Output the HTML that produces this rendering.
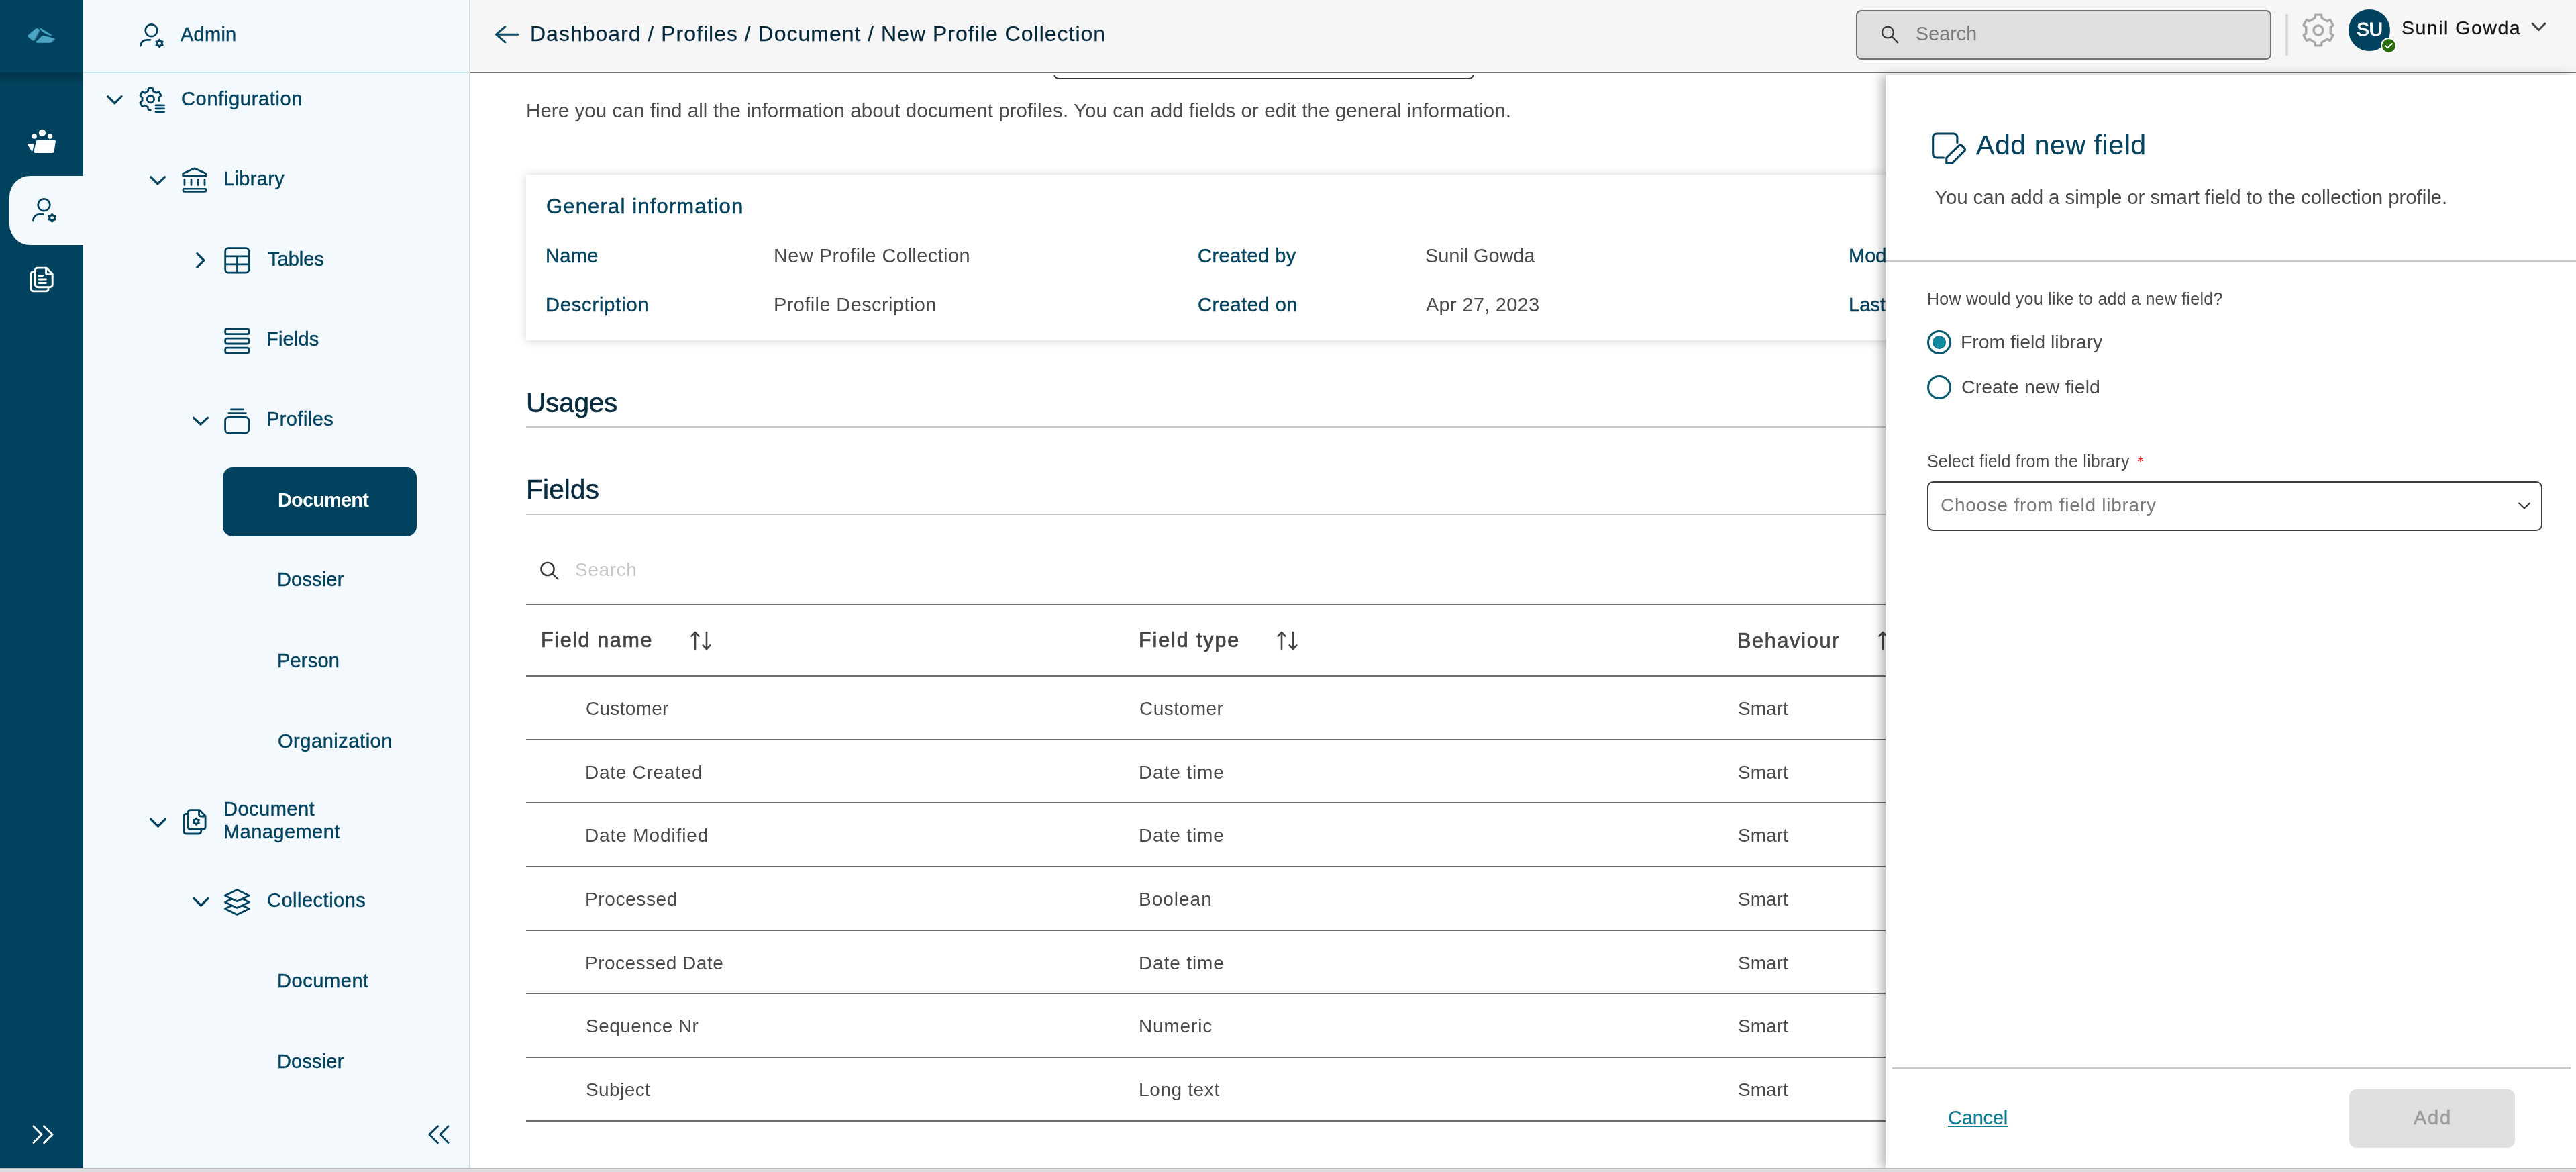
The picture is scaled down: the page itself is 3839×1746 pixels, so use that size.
<!DOCTYPE html>
<html><head><meta charset="utf-8"><style>
html,body{margin:0;padding:0;width:3839px;height:1746px;overflow:hidden;background:#fff}
body{position:relative;font-family:"Liberation Sans",sans-serif}
.t{position:absolute;white-space:nowrap;line-height:1;font-family:"Liberation Sans",sans-serif;will-change:transform}
</style></head><body>
<div style="position:absolute;left:0;top:0;width:124px;height:1740px;background:#01435f"></div>
<div style="position:absolute;left:0;top:108px;width:124px;height:18px;background:linear-gradient(rgba(0,0,0,0.22),rgba(0,0,0,0))"></div>
<svg style="position:absolute;left:36px;top:34px;" width="54" height="36" viewBox="0 0 54 36"><g fill="#2f6e86" transform="translate(1.7 0.6)"><path d="M5.5 18.6 L17 8.7 Q18.5 7.7 20.3 8.4 L21.6 9.3 Q22.6 10.4 21.8 12.2 L14.8 25.6 Q13.8 27 12.3 26.2 L5.8 20.7 Q4.4 19.7 5.5 18.6 Z"/><path d="M23 7 L41.2 18.2 L38.5 18.7 Q30.5 15.6 26.8 13 Q24 10.2 23 7 Z"/><path d="M17.3 28.3 L26.5 19.6 Q27.5 18.9 29 19.1 L43.8 22.6 Q45.3 23.1 44.4 24.4 L40.2 28.7 Q39.1 29.5 36.8 29.5 L18.4 29.6 Q16.6 29.3 17.3 28.3 Z"/></g><g fill="#4ba6c6"><path d="M5.5 18.6 L17 8.7 Q18.5 7.7 20.3 8.4 L21.6 9.3 Q22.6 10.4 21.8 12.2 L14.8 25.6 Q13.8 27 12.3 26.2 L5.8 20.7 Q4.4 19.7 5.5 18.6 Z"/><path d="M23 7 L41.2 18.2 L38.5 18.7 Q30.5 15.6 26.8 13 Q24 10.2 23 7 Z"/><path d="M17.3 28.3 L26.5 19.6 Q27.5 18.9 29 19.1 L43.8 22.6 Q45.3 23.1 44.4 24.4 L40.2 28.7 Q39.1 29.5 36.8 29.5 L18.4 29.6 Q16.6 29.3 17.3 28.3 Z"/></g></svg>
<svg style="position:absolute;left:36px;top:186px;" width="54" height="48" viewBox="0 0 54 48"><g fill="#fff"><circle cx="26.9" cy="11.9" r="5.1"/><circle cx="15.2" cy="17" r="3.7"/><circle cx="38.6" cy="17" r="3.7"/><path d="M20.8 22.3 L44.2 22.3 Q47.2 22.3 46.8 25.2 L44.6 39.4 Q44.1 42 41.3 42 L17 42 Q14 42 14.6 39.2 L17.7 25 Q18.3 22.3 20.8 22.3 Z"/><path d="M6.2 28.3 L13.5 28.3 Q14.8 28.3 14.6 29.6 L12.6 38.6 Q12 40.6 10.9 38.9 L5.3 29.8 Q4.6 28.3 6.2 28.3 Z"/></g></svg>
<div style="position:absolute;left:14px;top:262px;width:110px;height:103px;background:#f3f9fd;border-radius:31px 0 0 31px"></div>
<svg style="position:absolute;left:40px;top:286px;" width="52" height="52" viewBox="0 0 52 52"><g fill="none" stroke="#01435f" stroke-width="2.7" stroke-linecap="round"><circle cx="25.5" cy="19.3" r="8.9"/><path d="M9.4 42.2 Q10.5 33.3 19 33.3 L24 33.3"/></g><path d="M37.60 32.10 L39.80 34.69 L43.14 35.30 L42.00 38.50 L43.14 41.70 L39.80 42.31 L37.60 44.90 L35.40 42.31 L32.06 41.70 L33.20 38.50 L32.06 35.30 L35.40 34.69 Z" fill="#01435f" stroke="#01435f" stroke-width="1.3" stroke-linejoin="round"/><circle cx="37.60" cy="38.50" r="2.30" fill="#f3f9fd"/></svg>
<svg style="position:absolute;left:38px;top:390px;" width="50" height="52" viewBox="0 0 50 52"><g fill="none" stroke="#fff" stroke-width="2.9" stroke-linecap="round" stroke-linejoin="round"><path d="M14.4 14.6 L12 14.6 Q8.2 14.6 8.2 18.5 L8.2 40 Q8.2 43.9 12 43.9 L30.3 43.9 Q34.2 43.9 34.2 40"/><path d="M18.3 9.1 L31.2 9.1 L40.2 18.2 L40.2 33.8 Q40.2 37.7 36.3 37.7 L18.3 37.7 Q14.4 37.7 14.4 33.8 L14.4 13 Q14.4 9.1 18.3 9.1 Z"/><path d="M30.6 9.5 L30.6 16.5 Q30.6 18.6 32.7 18.6 L39.8 18.6"/><path d="M19.6 20.5 L25.6 20.5 M19.6 26 L30.4 26 M19.6 31.5 L30.4 31.5"/></g></svg>
<svg style="position:absolute;left:40px;top:1668px;" width="50" height="44" viewBox="0 0 50 44"><g fill="none" stroke="#fff" stroke-width="2.9" stroke-linecap="round" stroke-linejoin="round"><path d="M10 9.9 L22 22.2 L10 34.5 M25.3 9.7 L38.1 22.2 L25.6 34.8"/></g></svg>
<div style="position:absolute;left:124px;top:0;width:575px;height:1740px;background:#f3f9fd"></div>
<div style="position:absolute;left:699px;top:0;width:2px;height:1740px;background:#d4d9dc"></div>
<div style="position:absolute;left:124px;top:107px;width:575px;height:2px;background:#c4e6ef"></div>
<svg style="position:absolute;left:200px;top:26px;" width="52" height="52" viewBox="0 0 52 52"><g fill="none" stroke="#01435f" stroke-width="2.7" stroke-linecap="round"><circle cx="25.5" cy="19.3" r="8.9"/><path d="M9.4 42.2 Q10.5 33.3 19 33.3 L24 33.3"/></g><path d="M37.60 32.10 L39.80 34.69 L43.14 35.30 L42.00 38.50 L43.14 41.70 L39.80 42.31 L37.60 44.90 L35.40 42.31 L32.06 41.70 L33.20 38.50 L32.06 35.30 L35.40 34.69 Z" fill="#01435f" stroke="#01435f" stroke-width="1.3" stroke-linejoin="round"/><circle cx="37.60" cy="38.50" r="2.30" fill="#f3f9fd"/></svg>
<div id="sb_admin" class="t" style="left:269.00px;top:37.45px;font-size:29.00px;font-weight:400;color:#01435f;letter-spacing:0.250px;-webkit-text-stroke:0.45px #01435f;">Admin</div>
<svg style="position:absolute;left:150px;top:124px;" width="100" height="50" viewBox="0 0 100 50"><g fill="none" stroke="#01435f" stroke-width="3.2" stroke-linecap="round" stroke-linejoin="round"><path d="M10.7 19.6 L20.9 29.9 L31.1 19.6"/></g><g fill="none" stroke="#01435f" stroke-width="2.8" stroke-linecap="round" stroke-linejoin="round"><path d="M74.40 40.10 L74.26 40.10 L74.11 40.10 L73.97 40.09 L73.83 40.09 L73.68 40.08 L73.54 40.08 L73.40 40.07 L73.26 40.06 L73.11 40.05 L72.97 40.04 L72.83 40.02 L72.69 40.01 L72.54 39.99 L72.40 39.98 L72.26 39.96 L72.12 39.94 L71.98 39.92 L71.83 39.90 L71.69 39.88 L71.55 39.85 L71.41 39.83 L71.29 39.70 L71.20 39.43 L71.11 39.15 L71.03 38.88 L70.96 38.61 L70.89 38.33 L70.82 38.06 L70.76 37.79 L70.70 37.51 L70.65 37.24 L70.60 36.97 L70.55 36.69 L70.51 36.42 L70.48 36.15 L70.44 35.87 L70.42 35.60 L70.36 35.42 L70.26 35.39 L70.16 35.35 L70.06 35.31 L69.96 35.28 L69.86 35.24 L69.75 35.20 L69.65 35.16 L69.55 35.11 L69.46 35.07 L69.36 35.03 L69.26 34.98 L69.16 34.94 L69.06 34.89 L68.96 34.85 L68.87 34.80 L68.77 34.75 L68.67 34.70 L68.58 34.65 L68.48 34.60 L68.39 34.55 L68.29 34.49 L68.20 34.44 L68.11 34.38 L68.01 34.33 L67.92 34.27 L67.83 34.22 L67.74 34.16 L67.65 34.10 L67.56 34.04 L67.47 33.98 L67.38 33.92 L67.29 33.86 L67.20 33.80 L67.11 33.73 L67.02 33.67 L66.94 33.60 L66.85 33.54 L66.77 33.47 L66.68 33.40 L66.60 33.34 L66.51 33.27 L66.43 33.20 L66.35 33.13 L66.26 33.06 L66.08 33.10 L65.84 33.21 L65.58 33.32 L65.33 33.43 L65.07 33.53 L64.81 33.63 L64.55 33.72 L64.29 33.81 L64.02 33.90 L63.75 33.98 L63.48 34.06 L63.21 34.13 L62.94 34.21 L62.66 34.27 L62.38 34.34 L62.10 34.39 L61.93 34.35 L61.84 34.24 L61.75 34.13 L61.65 34.02 L61.57 33.91 L61.48 33.80 L61.39 33.68 L61.30 33.57 L61.22 33.46 L61.13 33.34 L61.05 33.22 L60.97 33.11 L60.88 32.99 L60.80 32.87 L60.72 32.75 L60.65 32.63 L60.57 32.51 L60.49 32.39 L60.42 32.27 L60.34 32.15 L60.27 32.02 L60.20 31.90 L60.13 31.78 L60.06 31.65 L59.99 31.53 L59.92 31.40 L59.85 31.27 L59.79 31.15 L59.72 31.02 L59.66 30.89 L59.60 30.76 L59.54 30.63 L59.48 30.50 L59.42 30.37 L59.36 30.24 L59.30 30.11 L59.25 29.98 L59.19 29.84 L59.14 29.71 L59.09 29.58 L59.04 29.44 L58.99 29.31 L58.94 29.17 L58.99 29.01 L59.18 28.79 L59.37 28.58 L59.57 28.38 L59.77 28.17 L59.97 27.97 L60.17 27.78 L60.38 27.59 L60.59 27.40 L60.80 27.22 L61.01 27.04 L61.22 26.86 L61.44 26.69 L61.66 26.52 L61.88 26.36 L62.10 26.20 L62.23 26.07 L62.21 25.96 L62.19 25.85 L62.17 25.75 L62.15 25.64 L62.14 25.53 L62.12 25.43 L62.11 25.32 L62.09 25.21 L62.08 25.10 L62.07 25.00 L62.06 24.89 L62.05 24.78 L62.04 24.67 L62.03 24.56 L62.02 24.46 L62.02 24.35 L62.01 24.24 L62.01 24.13 L62.00 24.02 L62.00 23.92 L62.00 23.81 L62.00 23.70 L62.00 23.59 L62.00 23.48 L62.00 23.38 L62.01 23.27 L62.01 23.16 L62.02 23.05 L62.02 22.94 L62.03 22.84 L62.04 22.73 L62.05 22.62 L62.06 22.51 L62.07 22.40 L62.08 22.30 L62.09 22.19 L62.11 22.08 L62.12 21.97 L62.14 21.87 L62.15 21.76 L62.17 21.65 L62.19 21.55 L62.21 21.44 L62.23 21.33 L62.10 21.20 L61.88 21.04 L61.66 20.88 L61.44 20.71 L61.22 20.54 L61.01 20.36 L60.80 20.18 L60.59 20.00 L60.38 19.81 L60.17 19.62 L59.97 19.43 L59.77 19.23 L59.57 19.02 L59.37 18.82 L59.18 18.61 L58.99 18.39 L58.94 18.23 L58.99 18.09 L59.04 17.96 L59.09 17.82 L59.14 17.69 L59.19 17.56 L59.25 17.42 L59.30 17.29 L59.36 17.16 L59.42 17.03 L59.48 16.90 L59.54 16.77 L59.60 16.64 L59.66 16.51 L59.72 16.38 L59.79 16.25 L59.85 16.13 L59.92 16.00 L59.99 15.87 L60.06 15.75 L60.13 15.62 L60.20 15.50 L60.27 15.38 L60.34 15.25 L60.42 15.13 L60.49 15.01 L60.57 14.89 L60.65 14.77 L60.72 14.65 L60.80 14.53 L60.88 14.41 L60.97 14.29 L61.05 14.18 L61.13 14.06 L61.22 13.94 L61.30 13.83 L61.39 13.72 L61.48 13.60 L61.57 13.49 L61.65 13.38 L61.75 13.27 L61.84 13.16 L61.93 13.05 L62.10 13.01 L62.38 13.06 L62.66 13.13 L62.94 13.19 L63.21 13.27 L63.48 13.34 L63.75 13.42 L64.02 13.50 L64.29 13.59 L64.55 13.68 L64.81 13.77 L65.07 13.87 L65.33 13.97 L65.58 14.08 L65.84 14.19 L66.08 14.30 L66.26 14.34 L66.35 14.27 L66.43 14.20 L66.51 14.13 L66.60 14.06 L66.68 14.00 L66.77 13.93 L66.85 13.86 L66.94 13.80 L67.02 13.73 L67.11 13.67 L67.20 13.60 L67.29 13.54 L67.38 13.48 L67.47 13.42 L67.56 13.36 L67.65 13.30 L67.74 13.24 L67.83 13.18 L67.92 13.13 L68.01 13.07 L68.11 13.02 L68.20 12.96 L68.29 12.91 L68.39 12.85 L68.48 12.80 L68.58 12.75 L68.67 12.70 L68.77 12.65 L68.87 12.60 L68.96 12.55 L69.06 12.51 L69.16 12.46 L69.26 12.42 L69.36 12.37 L69.46 12.33 L69.55 12.29 L69.65 12.24 L69.75 12.20 L69.86 12.16 L69.96 12.12 L70.06 12.09 L70.16 12.05 L70.26 12.01 L70.36 11.98 L70.42 11.80 L70.44 11.53 L70.48 11.25 L70.51 10.98 L70.55 10.71 L70.60 10.43 L70.65 10.16 L70.70 9.89 L70.76 9.61 L70.82 9.34 L70.89 9.07 L70.96 8.79 L71.03 8.52 L71.11 8.25 L71.20 7.97 L71.29 7.70 L71.41 7.57 L71.55 7.55 L71.69 7.52 L71.83 7.50 L71.98 7.48 L72.12 7.46 L72.26 7.44 L72.40 7.42 L72.54 7.41 L72.69 7.39 L72.83 7.38 L72.97 7.36 L73.11 7.35 L73.26 7.34 L73.40 7.33 L73.54 7.32 L73.68 7.32 L73.83 7.31 L73.97 7.31 L74.11 7.30 L74.26 7.30 L74.40 7.30 L74.54 7.30 L74.69 7.30 L74.83 7.31 L74.97 7.31 L75.12 7.32 L75.26 7.32 L75.40 7.33 L75.54 7.34 L75.69 7.35 L75.83 7.36 L75.97 7.38 L76.11 7.39 L76.26 7.41 L76.40 7.42 L76.54 7.44 L76.68 7.46 L76.82 7.48 L76.97 7.50 L77.11 7.52 L77.25 7.55 L77.39 7.57 L77.51 7.70 L77.60 7.97 L77.69 8.25 L77.77 8.52 L77.84 8.79 L77.91 9.07 L77.98 9.34 L78.04 9.61 L78.10 9.89 L78.15 10.16 L78.20 10.43 L78.25 10.71 L78.29 10.98 L78.32 11.25 L78.36 11.53 L78.38 11.80 L78.44 11.98 L78.54 12.01 L78.64 12.05 L78.74 12.09 L78.84 12.12 L78.94 12.16 L79.05 12.20 L79.15 12.24 L79.25 12.29 L79.34 12.33 L79.44 12.37 L79.54 12.42 L79.64 12.46 L79.74 12.51 L79.84 12.55 L79.93 12.60 L80.03 12.65 L80.13 12.70 L80.22 12.75 L80.32 12.80 L80.41 12.85 L80.51 12.91 L80.60 12.96 L80.69 13.02 L80.79 13.07 L80.88 13.13 L80.97 13.18 L81.06 13.24 L81.15 13.30 L81.24 13.36 L81.33 13.42 L81.42 13.48 L81.51 13.54 L81.60 13.60 L81.69 13.67 L81.78 13.73 L81.86 13.80 L81.95 13.86 L82.03 13.93 L82.12 14.00 L82.20 14.06 L82.29 14.13 L82.37 14.20 L82.45 14.27 L82.54 14.34 L82.72 14.30 L82.96 14.19 L83.22 14.08 L83.47 13.97 L83.73 13.87 L83.99 13.77 L84.25 13.68 L84.51 13.59 L84.78 13.50 L85.05 13.42 L85.32 13.34 L85.59 13.27 L85.86 13.19 L86.14 13.13 L86.42 13.06 L86.70 13.01 L86.87 13.05 L86.96 13.16 L87.05 13.27 L87.15 13.38 L87.23 13.49 L87.32 13.60 L87.41 13.72 L87.50 13.83 L87.58 13.94 L87.67 14.06 L87.75 14.18 L87.83 14.29 L87.92 14.41 L88.00 14.53 L88.08 14.65 L88.15 14.77 L88.23 14.89 L88.31 15.01 L88.38 15.13 L88.46 15.25 L88.53 15.38 L88.60 15.50 L88.67 15.62 L88.74 15.75 L88.81 15.87 L88.88 16.00 L88.95 16.13 L89.01 16.25 L89.08 16.38 L89.14 16.51 L89.20 16.64 L89.26 16.77 L89.32 16.90 L89.38 17.03 L89.44 17.16 L89.50 17.29 L89.55 17.42 L89.61 17.56 L89.66 17.69 L89.71 17.82 L89.76 17.96 L89.81 18.09 L89.86 18.23 L89.81 18.39 L89.62 18.61 L89.43 18.82 L89.23 19.02 L89.03 19.23 L88.83 19.43 L88.63 19.62 L88.42 19.81 L88.21 20.00 L88.00 20.18 L87.79 20.36 L87.58 20.54 L87.36 20.71 L87.14 20.88 L86.92 21.04 L86.70 21.20 L86.57 21.33 L86.59 21.44 L86.61 21.55 L86.63 21.65 L86.65 21.76 L86.66 21.87 L86.68 21.97 L86.69 22.08 L86.71 22.19 L86.72 22.30 L86.73 22.40 L86.74 22.51 L86.75 22.62 L86.76 22.73 L86.77 22.84 L86.78 22.94 L86.78 23.05 L86.79 23.16 L86.79 23.27 L86.80 23.38 L86.80 23.48 L86.80 23.59 L86.80 23.70 L86.80 23.81 L86.80 23.92 L86.80 24.02 L86.79 24.13 L86.79 24.24 L86.78 24.35 L86.78 24.46 L86.77 24.56 L86.76 24.67 L86.75 24.78 L86.74 24.89 L86.73 25.00 L86.72 25.10 L86.71 25.21 L86.69 25.32 L86.68 25.43 L86.66 25.53 L86.65 25.64 L86.63 25.75 L86.61 25.85 L86.59 25.96 L86.57 26.07 L86.70 26.20 L86.92 26.36"/><circle cx="74.4" cy="23.7" r="5.2"/><path d="M82 32.8 L94.6 32.8 M82 37.8 L94.6 37.8 M82 42.7 L94.6 42.7"/></g></svg>
<div id="sb_config" class="t" style="left:270.00px;top:132.85px;font-size:29.00px;font-weight:400;color:#01435f;letter-spacing:0.667px;-webkit-text-stroke:0.45px #01435f;">Configuration</div>
<svg style="position:absolute;left:215px;top:244px;" width="100" height="50" viewBox="0 0 100 50"><g fill="none" stroke="#01435f" stroke-width="3.2" stroke-linecap="round" stroke-linejoin="round"><path d="M9.6 19.6 L20 29.9 L30.5 19.6"/></g><g fill="none" stroke="#01435f" stroke-width="2.8" stroke-linecap="round" stroke-linejoin="round"><path d="M57.7 14.5 L74.9 6.8 L92 14.5 L92 18.2 L57.7 18.2 Z"/><path d="M59.9 23.5 L59.9 31.6 M70 23.5 L70 31.6 M80 23.5 L80 31.6 M90 23.5 L90 31.6"/><rect x="57.9" y="37.2" width="33.9" height="4.2" rx="0.8" stroke-width="2.5"/></g></svg>
<div id="sb_library" class="t" style="left:333.00px;top:251.85px;font-size:29.00px;font-weight:400;color:#01435f;letter-spacing:0.333px;-webkit-text-stroke:0.45px #01435f;">Library</div>
<svg style="position:absolute;left:284px;top:364px;" width="100" height="50" viewBox="0 0 100 50"><g fill="none" stroke="#01435f" stroke-width="3.2" stroke-linecap="round" stroke-linejoin="round"><path d="M9.8 13.7 L20 23.9 L9.8 34.3"/></g><g fill="none" stroke="#01435f" stroke-width="2.8"><rect x="51.7" y="5.7" width="35.2" height="36.4" rx="4.5"/><path d="M51.7 17.9 L86.9 17.9 M51.7 29.9 L86.9 29.9 M69.5 17.9 L69.5 42.1"/></g></svg>
<div id="sb_tables" class="t" style="left:398.60px;top:372.15px;font-size:29.00px;font-weight:400;color:#01435f;letter-spacing:-0.000px;-webkit-text-stroke:0.45px #01435f;">Tables</div>
<svg style="position:absolute;left:284px;top:484px;" width="100" height="50" viewBox="0 0 100 50"><g fill="none" stroke="#01435f" stroke-width="2.8"><rect x="51.7" y="5.9" width="35.2" height="7.8" rx="2.5"/><rect x="51.7" y="20.2" width="35.2" height="7.8" rx="2.5"/><rect x="51.7" y="34.2" width="35.2" height="7.9" rx="2.5"/></g></svg>
<div id="sb_fields" class="t" style="left:397.00px;top:491.25px;font-size:29.00px;font-weight:400;color:#01435f;letter-spacing:0.200px;-webkit-text-stroke:0.45px #01435f;">Fields</div>
<svg style="position:absolute;left:280px;top:602px;" width="100" height="50" viewBox="0 0 100 50"><g fill="none" stroke="#01435f" stroke-width="3.2" stroke-linecap="round" stroke-linejoin="round"><path d="M8.5 20.3 L19 30.1 L29.4 20.3"/></g><g fill="none" stroke="#01435f" stroke-width="2.8" stroke-linecap="round"><path d="M64.4 7.9 L82.3 7.9 M60.7 13.7 L86.3 13.7"/><rect x="55.6" y="19.5" width="35.2" height="23.5" rx="5"/></g></svg>
<div id="sb_profiles" class="t" style="left:396.60px;top:610.45px;font-size:29.00px;font-weight:400;color:#01435f;letter-spacing:0.429px;-webkit-text-stroke:0.45px #01435f;">Profiles</div>
<div style="position:absolute;left:332px;top:696px;width:289px;height:103px;background:#01435f;border-radius:15px"></div>
<div id="sb_doc_active" class="t" style="left:414.00px;top:730.75px;font-size:29.00px;font-weight:700;color:#ffffff;letter-spacing:-0.857px;">Document</div>
<div id="sb_dossier" class="t" style="left:413.00px;top:849.25px;font-size:29.00px;font-weight:400;color:#01435f;letter-spacing:0.167px;-webkit-text-stroke:0.45px #01435f;">Dossier</div>
<div id="sb_person" class="t" style="left:413.00px;top:969.95px;font-size:29.00px;font-weight:400;color:#01435f;letter-spacing:0.200px;-webkit-text-stroke:0.45px #01435f;">Person</div>
<div id="sb_org" class="t" style="left:414.00px;top:1090.25px;font-size:29.00px;font-weight:400;color:#01435f;letter-spacing:0.545px;-webkit-text-stroke:0.45px #01435f;">Organization</div>
<svg style="position:absolute;left:265px;top:1195px;" width="50" height="55" viewBox="0 0 50 55"><g fill="none" stroke="#01435f" stroke-width="2.8" stroke-linecap="round" stroke-linejoin="round"><path d="M15.2 17.4 L12.6 17.4 Q8.7 17.4 8.7 21.3 L8.7 43.1 Q8.7 47 12.6 47 L30.9 47 Q34.8 47 34.8 43.1 L34.8 40.4"/><path d="M19.1 11.7 L32.4 11.7 L41.1 20.6 L41.1 36.5 Q41.1 40.4 37.2 40.4 L19.1 40.4 Q15.2 40.4 15.2 36.5 L15.2 15.6 Q15.2 11.7 19.1 11.7 Z"/><path d="M31.5 12 L31.5 18.3 Q31.5 21 34.2 21 L40.8 21"/></g><path d="M27.50 23.10 L29.40 25.41 L32.35 25.90 L31.30 28.70 L32.35 31.50 L29.40 31.99 L27.50 34.30 L25.60 31.99 L22.65 31.50 L23.70 28.70 L22.65 25.90 L25.60 25.41 Z" fill="#01435f" stroke="#01435f" stroke-width="1.3" stroke-linejoin="round"/><circle cx="27.50" cy="28.70" r="2.00" fill="#f3f9fd"/></svg>
<div id="sb_dm1" class="t" style="left:333.00px;top:1190.75px;font-size:29.00px;font-weight:400;color:#01435f;letter-spacing:0.500px;-webkit-text-stroke:0.45px #01435f;">Document</div>
<div id="sb_dm2" class="t" style="left:333.00px;top:1225.45px;font-size:29.00px;font-weight:400;color:#01435f;letter-spacing:0.444px;-webkit-text-stroke:0.45px #01435f;">Management</div>
<svg style="position:absolute;left:217.5px;top:1207.5px;" width="40" height="40" viewBox="0 0 40 40"><path d="M6.5 12 L17.5 23 L28.5 12" fill="none" stroke="#01435f" stroke-width="3.2" stroke-linecap="round" stroke-linejoin="round"/></svg>
<svg style="position:absolute;left:281.5px;top:1326.3px;" width="40" height="40" viewBox="0 0 40 40"><path d="M6.5 12 L17.5 23 L28.5 12" fill="none" stroke="#01435f" stroke-width="3.2" stroke-linecap="round" stroke-linejoin="round"/></svg>
<svg style="position:absolute;left:328px;top:1318px;" width="50" height="52" viewBox="0 0 50 52"><path d="M25.3 27.20 L43.3 35.80 L25.3 44.40 L7.3 35.80 Z" fill="#f3f9fd" stroke="#01435f" stroke-width="2.8" stroke-linejoin="round"/><path d="M25.3 17.40 L43.3 26.00 L25.3 34.60 L7.3 26.00 Z" fill="#f3f9fd" stroke="#01435f" stroke-width="2.8" stroke-linejoin="round"/><path d="M25.3 7.60 L43.3 16.20 L25.3 24.80 L7.3 16.20 Z" fill="#f3f9fd" stroke="#01435f" stroke-width="2.8" stroke-linejoin="round"/></svg>
<div id="sb_collections" class="t" style="left:397.60px;top:1327.45px;font-size:29.00px;font-weight:400;color:#01435f;letter-spacing:0.500px;-webkit-text-stroke:0.45px #01435f;">Collections</div>
<div id="sb_cdoc" class="t" style="left:413.00px;top:1446.75px;font-size:29.00px;font-weight:400;color:#01435f;letter-spacing:0.571px;-webkit-text-stroke:0.45px #01435f;">Document</div>
<div id="sb_cdossier" class="t" style="left:413.40px;top:1567.15px;font-size:29.00px;font-weight:400;color:#01435f;letter-spacing:0.167px;-webkit-text-stroke:0.45px #01435f;">Dossier</div>
<svg style="position:absolute;left:630px;top:1668px;" width="50" height="44" viewBox="0 0 50 44"><g fill="none" stroke="#01435f" stroke-width="2.9" stroke-linecap="round" stroke-linejoin="round"><path d="M38 9.9 L26 22.2 L38 34.5 M22.7 9.7 L9.9 22.2 L22.4 34.8"/></g></svg>
<div style="position:absolute;left:701px;top:0;width:3138px;height:1740px;background:#fff"></div>
<div style="position:absolute;left:1569.5px;top:50px;width:627px;height:68px;border:2px solid #3a3a3a;border-radius:8px;box-sizing:border-box"></div>
<div style="position:absolute;left:701px;top:100px;width:3138px;height:12px;background:#fff"></div>
<div style="position:absolute;left:701px;top:0;width:3138px;height:106px;background:#f6f6f6"></div>
<div style="position:absolute;left:701px;top:107px;width:3138px;height:2px;background:#747474"></div>
<svg style="position:absolute;left:730px;top:30px;" width="50" height="44" viewBox="0 0 50 44"><g fill="none" stroke="#0e4a63" stroke-width="3.1" stroke-linecap="round" stroke-linejoin="round"><path d="M22.8 9.6 L9.6 21.2 L22.8 32.9 M9.6 21.2 L41.7 21.2"/></g></svg>
<div id="bc" class="t" style="left:789.60px;top:34.01px;font-size:32.00px;font-weight:400;color:#03283b;letter-spacing:1.000px;-webkit-text-stroke:0.25px #03283b;">Dashboard / Profiles / Document / New Profile Collection</div>
<div style="position:absolute;left:2766px;top:15px;width:619px;height:74px;background:#dfdfdf;border:2px solid #727272;border-radius:8px;box-sizing:border-box"></div>
<svg style="position:absolute;left:2796px;top:32px;" width="40" height="40" viewBox="0 0 40 40"><g fill="none" stroke="#383838" stroke-width="2.2" stroke-linecap="round"><circle cx="17.4" cy="16" r="8.4"/><path d="M23.5 22.3 L32.3 31.4"/></g></svg>
<div id="hsearch" class="t" style="left:2854.60px;top:36.09px;font-size:28.60px;font-weight:400;color:#7b7b7b;letter-spacing:0.100px;">Search</div>
<div style="position:absolute;left:3406px;top:21px;width:4px;height:62px;background:#d9d9d9"></div>
<svg style="position:absolute;left:3425px;top:15px;" width="60" height="60" viewBox="0 0 60 60"><g fill="none" stroke="#a9a9a9" stroke-width="3.4" stroke-linejoin="round"><path d="M25.01 11.88 L25.39 7.16 L34.61 7.16 L34.99 11.88 L43.20 16.61 L47.48 14.59 L52.08 22.57 L48.19 25.26 L48.19 34.74 L52.08 37.43 L47.48 45.41 L43.20 43.39 L34.99 48.12 L34.61 52.84 L25.39 52.84 L25.01 48.12 L16.80 43.39 L12.52 45.41 L7.92 37.43 L11.81 34.74 L11.81 25.26 L7.92 22.57 L12.52 14.59 L16.80 16.61 Z"/><circle cx="30" cy="30" r="7"/></g></svg>
<div style="position:absolute;left:3500px;top:14px;width:62px;height:62px;border-radius:50%;background:#01425e"></div>
<div id="su" class="t" style="left:3511.60px;top:29.37px;font-size:28.50px;font-weight:400;color:#ffffff;letter-spacing:-0.500px;-webkit-text-stroke:1.00px #ffffff;">SU</div>
<div style="position:absolute;left:3547.5px;top:56px;width:24px;height:24px;border-radius:50%;background:#2a6d0b;border:2px solid #fff;box-sizing:border-box"></div>
<svg style="position:absolute;left:3547.5px;top:56px;" width="24" height="24" viewBox="0 0 24 24"><path d="M7.2 12.3 L10.5 15.3 L16.8 9" fill="none" stroke="#fff" stroke-width="2" stroke-linecap="round" stroke-linejoin="round"/></svg>
<div id="uname" class="t" style="left:3578.60px;top:27.07px;font-size:28.50px;font-weight:400;color:#151515;letter-spacing:1.500px;-webkit-text-stroke:0.30px #151515;">Sunil Gowda</div>
<svg style="position:absolute;left:3765px;top:25px;" width="36" height="30" viewBox="0 0 36 30"><path d="M9 10 L18.5 19.5 L28 10" fill="none" stroke="#444" stroke-width="3" stroke-linecap="round" stroke-linejoin="round"/></svg>
<div id="desc" class="t" style="left:784.00px;top:150.33px;font-size:29.50px;font-weight:400;color:#4a4a4a;letter-spacing:0.075px;">Here you can find all the information about document profiles. You can add fields or edit the general information.</div>
<div style="position:absolute;left:784px;top:260px;width:2200px;height:247px;background:#fff;box-shadow:0 1px 13px rgba(0,0,0,0.17)"></div>
<div id="gi" class="t" style="left:814.40px;top:291.66px;font-size:31.00px;font-weight:400;color:#01435f;letter-spacing:1.167px;-webkit-text-stroke:0.50px #01435f;">General information</div>
<div id="lbl_name" class="t" style="left:813.40px;top:367.45px;font-size:29.00px;font-weight:400;color:#01435f;letter-spacing:0.333px;-webkit-text-stroke:0.45px #01435f;">Name</div>
<div id="lbl_desc" class="t" style="left:813.00px;top:440.05px;font-size:29.00px;font-weight:400;color:#01435f;letter-spacing:0.850px;-webkit-text-stroke:0.45px #01435f;">Description</div>
<div id="val_name" class="t" style="left:1153.00px;top:367.45px;font-size:29.00px;font-weight:400;color:#4a4a4a;letter-spacing:0.429px;">New Profile Collection</div>
<div id="val_desc" class="t" style="left:1153.00px;top:440.05px;font-size:29.00px;font-weight:400;color:#4a4a4a;letter-spacing:0.389px;">Profile Description</div>
<div id="lbl_cby" class="t" style="left:1785.00px;top:367.45px;font-size:29.00px;font-weight:400;color:#01435f;letter-spacing:0.500px;-webkit-text-stroke:0.45px #01435f;">Created by</div>
<div id="lbl_con" class="t" style="left:1785.00px;top:440.05px;font-size:29.00px;font-weight:400;color:#01435f;letter-spacing:0.556px;-webkit-text-stroke:0.45px #01435f;">Created on</div>
<div id="val_cby" class="t" style="left:2123.80px;top:367.45px;font-size:29.00px;font-weight:400;color:#4a4a4a;letter-spacing:-0.100px;">Sunil Gowda</div>
<div id="val_con" class="t" style="left:2124.80px;top:440.05px;font-size:29.00px;font-weight:400;color:#4a4a4a;letter-spacing:0.273px;">Apr 27, 2023</div>
<div id="lbl_mby" class="t" style="left:2755.00px;top:367.45px;font-size:29.00px;font-weight:400;color:#01435f;letter-spacing:0.000px;-webkit-text-stroke:0.45px #01435f;">Modified by</div>
<div id="lbl_lm" class="t" style="left:2755.00px;top:440.05px;font-size:29.00px;font-weight:400;color:#01435f;letter-spacing:0.000px;-webkit-text-stroke:0.45px #01435f;">Last modified</div>
<div id="usages" class="t" style="left:784.00px;top:579.62px;font-size:40.50px;font-weight:400;color:#062b3e;letter-spacing:-0.200px;-webkit-text-stroke:0.60px #062b3e;">Usages</div>
<div style="position:absolute;left:784px;top:635px;width:2100px;height:2px;background:#c8c8c8"></div>
<div id="fields_h" class="t" style="left:784.00px;top:708.72px;font-size:40.50px;font-weight:400;color:#062b3e;letter-spacing:0.200px;-webkit-text-stroke:0.60px #062b3e;">Fields</div>
<div style="position:absolute;left:784px;top:765px;width:2100px;height:2px;background:#c8c8c8"></div>
<svg style="position:absolute;left:796px;top:828px;" width="44" height="44" viewBox="0 0 44 44"><g fill="none" stroke="#333" stroke-width="2.4" stroke-linecap="round"><circle cx="20" cy="19.5" r="9.6"/><path d="M27 26.5 L35.5 34.5"/></g></svg>
<div id="tsearch" class="t" style="left:857.20px;top:835.30px;font-size:28.00px;font-weight:400;color:#c6c6c6;letter-spacing:0.600px;">Search</div>
<div style="position:absolute;left:784px;top:900px;width:2100px;height:2px;background:#6e6e6e"></div>
<div id="th1" class="t" style="left:806.20px;top:937.68px;font-size:30.50px;font-weight:400;color:#454545;letter-spacing:1.611px;-webkit-text-stroke:0.72px #454545;">Field name</div>
<div id="th2" class="t" style="left:1697.40px;top:937.68px;font-size:30.50px;font-weight:400;color:#454545;letter-spacing:1.889px;-webkit-text-stroke:0.72px #454545;">Field type</div>
<div id="th3" class="t" style="left:2589.40px;top:938.58px;font-size:30.50px;font-weight:400;color:#454545;letter-spacing:1.750px;-webkit-text-stroke:0.72px #454545;">Behaviour</div>
<svg style="position:absolute;left:1027px;top:938px;" width="36" height="34" viewBox="0 0 36 34"><g fill="none" stroke="#444" stroke-width="2.6" stroke-linecap="round" stroke-linejoin="round"><path d="M9 29 L9 4 M3.6 9.6 L9 4 L14.4 9.6"/><path d="M26 4 L26 29 M20.6 23.4 L26 29 L31.4 23.4"/></g></svg>
<svg style="position:absolute;left:1901px;top:938px;" width="36" height="34" viewBox="0 0 36 34"><g fill="none" stroke="#444" stroke-width="2.6" stroke-linecap="round" stroke-linejoin="round"><path d="M9 29 L9 4 M3.6 9.6 L9 4 L14.4 9.6"/><path d="M26 4 L26 29 M20.6 23.4 L26 29 L31.4 23.4"/></g></svg>
<svg style="position:absolute;left:2797px;top:938px;" width="36" height="34" viewBox="0 0 36 34"><g fill="none" stroke="#444" stroke-width="2.6" stroke-linecap="round" stroke-linejoin="round"><path d="M9 29 L9 4 M3.6 9.6 L9 4 L14.4 9.6"/><path d="M26 4 L26 29 M20.6 23.4 L26 29 L31.4 23.4"/></g></svg>
<div style="position:absolute;left:784px;top:1006px;width:2100px;height:2px;background:#6e6e6e"></div>
<div id="r0a" class="t" style="left:873.00px;top:1042.30px;font-size:28.00px;font-weight:400;color:#4a4a4a;letter-spacing:0.286px;">Customer</div>
<div id="r0b" class="t" style="left:1698.20px;top:1042.30px;font-size:28.00px;font-weight:400;color:#4a4a4a;letter-spacing:0.500px;">Customer</div>
<div id="r0c" class="t" style="left:2590.00px;top:1042.30px;font-size:28.00px;font-weight:400;color:#4a4a4a;letter-spacing:0.000px;">Smart</div>
<div style="position:absolute;left:784px;top:1101px;width:2100px;height:2px;background:#6e6e6e"></div>
<div id="r1a" class="t" style="left:872.00px;top:1137.30px;font-size:28.00px;font-weight:400;color:#4a4a4a;letter-spacing:0.727px;">Date Created</div>
<div id="r1b" class="t" style="left:1697.20px;top:1137.30px;font-size:28.00px;font-weight:400;color:#4a4a4a;letter-spacing:0.875px;">Date time</div>
<div id="r1c" class="t" style="left:2590.00px;top:1137.30px;font-size:28.00px;font-weight:400;color:#4a4a4a;letter-spacing:0.000px;">Smart</div>
<div style="position:absolute;left:784px;top:1195px;width:2100px;height:2px;background:#6e6e6e"></div>
<div id="r2a" class="t" style="left:872.00px;top:1231.30px;font-size:28.00px;font-weight:400;color:#4a4a4a;letter-spacing:0.875px;">Date Modified</div>
<div id="r2b" class="t" style="left:1697.20px;top:1231.30px;font-size:28.00px;font-weight:400;color:#4a4a4a;letter-spacing:0.875px;">Date time</div>
<div id="r2c" class="t" style="left:2590.00px;top:1231.30px;font-size:28.00px;font-weight:400;color:#4a4a4a;letter-spacing:0.000px;">Smart</div>
<div style="position:absolute;left:784px;top:1290px;width:2100px;height:2px;background:#6e6e6e"></div>
<div id="r3a" class="t" style="left:872.00px;top:1326.30px;font-size:28.00px;font-weight:400;color:#4a4a4a;letter-spacing:0.625px;">Processed</div>
<div id="r3b" class="t" style="left:1697.20px;top:1326.30px;font-size:28.00px;font-weight:400;color:#4a4a4a;letter-spacing:1.000px;">Boolean</div>
<div id="r3c" class="t" style="left:2590.00px;top:1326.30px;font-size:28.00px;font-weight:400;color:#4a4a4a;letter-spacing:0.000px;">Smart</div>
<div style="position:absolute;left:784px;top:1385px;width:2100px;height:2px;background:#6e6e6e"></div>
<div id="r4a" class="t" style="left:872.00px;top:1421.30px;font-size:28.00px;font-weight:400;color:#4a4a4a;letter-spacing:0.500px;">Processed Date</div>
<div id="r4b" class="t" style="left:1697.20px;top:1421.30px;font-size:28.00px;font-weight:400;color:#4a4a4a;letter-spacing:0.875px;">Date time</div>
<div id="r4c" class="t" style="left:2590.00px;top:1421.30px;font-size:28.00px;font-weight:400;color:#4a4a4a;letter-spacing:0.000px;">Smart</div>
<div style="position:absolute;left:784px;top:1479px;width:2100px;height:2px;background:#6e6e6e"></div>
<div id="r5a" class="t" style="left:873.00px;top:1515.30px;font-size:28.00px;font-weight:400;color:#4a4a4a;letter-spacing:0.450px;">Sequence Nr</div>
<div id="r5b" class="t" style="left:1697.20px;top:1515.30px;font-size:28.00px;font-weight:400;color:#4a4a4a;letter-spacing:0.833px;">Numeric</div>
<div id="r5c" class="t" style="left:2590.00px;top:1515.30px;font-size:28.00px;font-weight:400;color:#4a4a4a;letter-spacing:0.000px;">Smart</div>
<div style="position:absolute;left:784px;top:1574px;width:2100px;height:2px;background:#6e6e6e"></div>
<div id="r6a" class="t" style="left:873.00px;top:1610.30px;font-size:28.00px;font-weight:400;color:#4a4a4a;letter-spacing:0.417px;">Subject</div>
<div id="r6b" class="t" style="left:1697.20px;top:1610.30px;font-size:28.00px;font-weight:400;color:#4a4a4a;letter-spacing:0.625px;">Long text</div>
<div id="r6c" class="t" style="left:2590.00px;top:1610.30px;font-size:28.00px;font-weight:400;color:#4a4a4a;letter-spacing:0.000px;">Smart</div>
<div style="position:absolute;left:784px;top:1669px;width:2100px;height:2px;background:#6e6e6e"></div>
<div style="position:absolute;left:2810px;top:112px;width:1029px;height:1628px;background:#fff;box-shadow:-7px 0 14px rgba(0,0,0,0.27)"></div>
<svg style="position:absolute;left:2860px;top:180px;" width="80" height="80" viewBox="0 0 80 80"><g fill="none" stroke="#01435f" stroke-width="3.1" stroke-linecap="round" stroke-linejoin="round"><path d="M56.9 32.6 L56.9 25 Q56.9 19 50.9 19 L26.7 19 Q20.7 19 20.7 25 L20.7 49 Q20.7 55 26.7 55 L36.5 55"/><path d="M40.8 55 L59.8 36.6 Q61.5 35 63.2 36.6 L67.8 41.2 Q69.4 42.9 67.8 44.6 L49.2 63.4 L40.8 63.4 Z"/></g></svg>
<div id="pt" class="t" style="left:2944.60px;top:195.79px;font-size:41.00px;font-weight:400;color:#01435f;letter-spacing:0.583px;-webkit-text-stroke:0.25px #01435f;">Add new field</div>
<div id="psub" class="t" style="left:2882.80px;top:279.23px;font-size:29.50px;font-weight:400;color:#4a4a4a;letter-spacing:-0.090px;">You can add a simple or smart field to the collection profile.</div>
<div style="position:absolute;left:2810px;top:388px;width:1029px;height:2px;background:#c8c8c8"></div>
<div id="pq" class="t" style="left:2871.80px;top:433.24px;font-size:25.00px;font-weight:400;color:#4a4a4a;letter-spacing:0.257px;">How would you like to add a new field?</div>
<div style="position:absolute;left:2872px;top:492px;width:36px;height:36px;border-radius:50%;border:3.3px solid #0b5b70;box-sizing:border-box;background:#fff"></div>
<div style="position:absolute;left:2881px;top:501px;width:18px;height:18px;border-radius:50%;background:#128aa1;box-shadow:0 0 0 1px #0d6b80"></div>
<div id="r1" class="t" style="left:2922.00px;top:494.77px;font-size:28.50px;font-weight:400;color:#4a4a4a;letter-spacing:-0.059px;">From field library</div>
<div style="position:absolute;left:2872px;top:559px;width:36px;height:36px;border-radius:50%;border:3.3px solid #0b5b70;box-sizing:border-box;background:#fff"></div>
<div id="r2" class="t" style="left:2923.00px;top:562.07px;font-size:28.50px;font-weight:400;color:#4a4a4a;letter-spacing:0.067px;">Create new field</div>
<div id="sel" class="t" style="left:2872.20px;top:675.34px;font-size:25.00px;font-weight:400;color:#4a4a4a;letter-spacing:0.196px;">Select field from the library</div>
<svg style="position:absolute;left:3183px;top:678px;" width="14" height="14" viewBox="0 0 14 14"><g stroke="#e0202a" stroke-width="1.4" stroke-linecap="round"><path d="M7 2.6 L7 10.4 M3.6 4.6 L10.4 8.4 M3.6 8.4 L10.4 4.6"/></g></svg>
<div style="position:absolute;left:2872px;top:717px;width:917px;height:73.5px;border:2.5px solid #3d3d3d;border-radius:9px;box-sizing:border-box"></div>
<div id="dd" class="t" style="left:2892.40px;top:739.10px;font-size:28.00px;font-weight:400;color:#7a7a7a;letter-spacing:0.729px;">Choose from field library</div>
<svg style="position:absolute;left:3748px;top:740px;" width="28" height="26" viewBox="0 0 28 26"><path d="M6 9.5 L14 17.5 L22 9.5" fill="none" stroke="#333" stroke-width="2" stroke-linecap="round" stroke-linejoin="round"/></svg>
<div style="position:absolute;left:2820px;top:1590px;width:1011px;height:2px;background:#c8c8c8"></div>
<div id="cancel" class="t" style="left:2903.00px;top:1650.95px;font-size:29.00px;font-weight:400;color:#0f7c93;letter-spacing:-0.200px;-webkit-text-stroke:0.25px #0f7c93;text-decoration:underline;text-decoration-thickness:2px;text-underline-offset:2px;">Cancel</div>
<div style="position:absolute;left:3501px;top:1623px;width:247px;height:87px;background:#e0e0e0;border-radius:11px"></div>
<div id="add" class="t" style="left:3597.20px;top:1650.95px;font-size:29.00px;font-weight:400;color:#9b9b9b;letter-spacing:1.750px;-webkit-text-stroke:0.60px #9b9b9b;">Add</div>
<div style="position:absolute;left:0;top:1740px;width:3839px;height:6px;background:#dcdce0;border-top:2px solid #b3b3b3;box-sizing:border-box"></div>
</body></html>
